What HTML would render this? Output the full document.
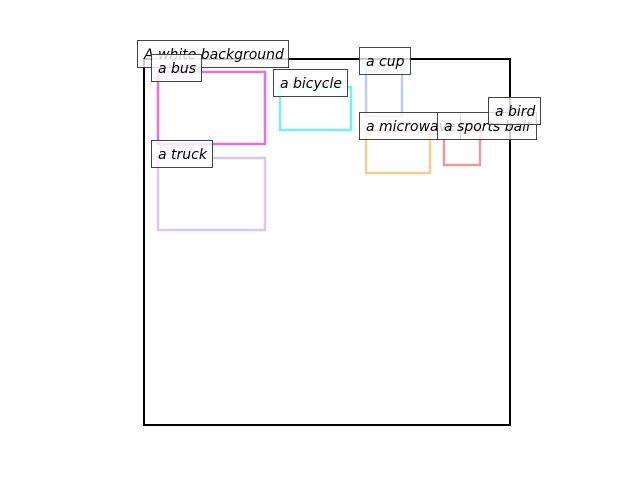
<!DOCTYPE html>
<html><head><style>
html,body{margin:0;padding:0;background:#fff;width:640px;height:480px;overflow:hidden}
text{font-family:"DejaVu Sans","Liberation Sans",sans-serif;font-style:italic;font-size:14px;fill:#000}
</style></head><body>
<svg width="640" height="480" xmlns="http://www.w3.org/2000/svg">
<rect x="144" y="59" width="366" height="366" fill="none" stroke="#000" stroke-width="2"/>
<g fill="none" stroke-width="2.5">
<rect x="158" y="72" width="107" height="72" stroke="#ea70d9"/>
<rect x="280" y="87" width="71" height="43" stroke="#74f0ee"/>
<rect x="366" y="65" width="36" height="51" stroke="#c0ccf6"/>
<rect x="366" y="131" width="64" height="42" stroke="#f5cf92"/>
<rect x="444" y="129" width="36" height="36" stroke="#e59c9c"/>
<rect x="494" y="110" width="13" height="14" stroke="#c0ccf6"/>
<rect x="158" y="158" width="107" height="72" stroke="#dcc6ec"/>
</g>
<g>
<rect x="137.5" y="40.5" width="151" height="27" fill="#fff" fill-opacity="0.8" stroke="#444"/>
<text x="144" y="59">A white background</text>
<rect x="151.5" y="54.5" width="50" height="27" fill="#fff" fill-opacity="0.8" stroke="#444"/>
<text x="158" y="73">a bus</text>
<rect x="273.5" y="69.5" width="74" height="27" fill="#fff" fill-opacity="0.8" stroke="#444"/>
<text x="280" y="88">a bicycle</text>
<rect x="359.5" y="47.5" width="51" height="27" fill="#fff" fill-opacity="0.8" stroke="#444"/>
<text x="366" y="66">a cup</text>
<rect x="359.5" y="112.5" width="101" height="27" fill="#fff" fill-opacity="0.8" stroke="#444"/>
<text x="366" y="131">a microwave</text>
<rect x="437.5" y="112.5" width="99" height="27" fill="#fff" fill-opacity="0.8" stroke="#444"/>
<text x="444" y="131">a sports ball</text>
<rect x="488.5" y="97.5" width="52" height="27" fill="#fff" fill-opacity="0.8" stroke="#444"/>
<text x="495" y="116">a bird</text>
<rect x="151.5" y="140.5" width="61" height="27" fill="#fff" fill-opacity="0.8" stroke="#444"/>
<text x="158" y="159">a truck</text>
</g>
</svg>
</body></html>
